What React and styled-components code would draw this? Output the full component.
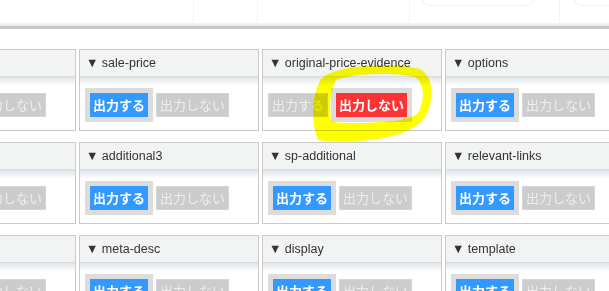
import React from 'react'
import styled, { createGlobalStyle } from 'styled-components'

const GlobalStyle = createGlobalStyle`
    html, body {
        margin: 0;
        padding: 0;
        background: #fff;
        overflow: hidden;
    }
    body {
        font-family: "Liberation Sans", Arial, "Noto Sans CJK JP", sans-serif;
    }
`;

const Page = styled.div`
    position: relative;
    width: 609px;
    height: 291px;
    overflow: hidden;
`;

const TopBar = styled.div`
    display: flex;
    height: 23px;
    overflow: hidden;
`;

const TopCell = styled.div`
    width: ${p => p.w}px;
    flex-shrink: 0;
    border-right: 1px solid #f4f4f4;
    padding-left: ${p => p.pad || 0}px;
    box-sizing: border-box;
`;

const FaintBox = styled.div`
    width: ${p => p.w}px;
    height: 20px;
    margin-top: -16px;
    border: 1px solid #f1f1f1;
    border-radius: 7px;
`;

const Rule = styled.div`
    height: 3px;
    background: linear-gradient(#f5f5f5, #e8e8e8);
    border-bottom: 3px solid #c9c9c9;
`;

const Grid = styled.div`
    display: grid;
    grid-template-columns: repeat(4, 180px);
    column-gap: 3px;
    row-gap: 11px;
    margin: 20px 0 0 -104px;
`;

const Card = styled.div`
    height: 82px;
    box-sizing: border-box;
    border: 1px solid #cacaca;
    display: flex;
    flex-direction: column;
`;

const Header = styled.div`
    height: 26px;
    line-height: 27px;
    background: #f2f3f3;
    border-bottom: 1px solid #d9dbde;
    padding-left: 6px;
    font-size: 12.5px;
    color: #333;
    white-space: nowrap;
`;

const Body = styled.div`
    flex: 1;
    display: flex;
    align-items: flex-start;
    gap: 3px;
    padding: 11px 0 0 5px;
    background: linear-gradient(#e0e4ea, #ffffff 9px);
`;

const Toggle = styled.div`
    display: flex;
    align-items: center;
    height: 34px;
`;

const Frame = styled.div`
    border: 5px solid #dcdcdc;
    display: flex;
`;

const Button = styled.span`
    display: inline-block;
    height: 24px;
    box-sizing: border-box;
    padding: 0 ${p => (p.on ? 2 : 3)}px;
    line-height: 22px;
    font-family: "Noto Sans CJK JP", sans-serif;
    font-size: 13px;
    font-weight: ${p => (p.on ? 700 : 400)};
    white-space: nowrap;
    color: ${p => (p.on ? '#fff' : '#eeeeee')};
    background: ${p => (p.on ? p.color : '#cccccc')};
    border: 1px solid ${p => (p.on ? p.color : '#d6d6d6')};
`;

const Highlight = styled.svg`
    position: absolute;
    left: 0;
    top: 0;
    pointer-events: none;
    mix-blend-mode: multiply;
`;

const BLUE = '#3399ff';
const RED = '#ff3333';

const Option = ({ label, on, color }) =>
    on ? (
        <Frame>
            <Button on color={color}>{label}</Button>
        </Frame>
    ) : (
        <Button>{label}</Button>
    );

const Field = ({ name, off }) => (
    <Card>
        <Header>▼ {name}</Header>
        <Body>
            <Toggle>
                <Option label="出力する" on={!off} color={BLUE} />
            </Toggle>
            <Toggle>
                <Option label="出力しない" on={off} color={RED} />
            </Toggle>
        </Body>
    </Card>
);

const fields = [
    { name: 'description' },
    { name: 'sale-price' },
    { name: 'original-price-evidence', off: true },
    { name: 'options' },
    { name: 'additional2' },
    { name: 'additional3' },
    { name: 'sp-additional' },
    { name: 'relevant-links' },
    { name: 'meta-key' },
    { name: 'meta-desc' },
    { name: 'display' },
    { name: 'template' },
];

export default () => {
    return (
        <Page>
            <GlobalStyle />
            <TopBar>
                <TopCell w={194} />
                <TopCell w={64} />
                <TopCell w={152} />
                <TopCell w={150} pad={12}>
                    <FaintBox w={110} />
                </TopCell>
                <TopCell w={60} pad={14}>
                    <FaintBox w={80} />
                </TopCell>
            </TopBar>
            <Rule />
            <Grid>
                {fields.map(f => (
                    <Field key={f.name} name={f.name} off={f.off} />
                ))}
            </Grid>
            <Highlight width="609" height="291" viewBox="0 0 609 291">
                <path
                    fillRule="evenodd"
                    fill="#ffff00"
                    d="M318 140 C311 122 311 96 321 79 C334 64 398 62 420 69 C434 77 435 100 425 117 C415 133 382 141 348 141 C333 141 321 141 318 140 Z
                       M331 121 C329 106 330 91 336 80 C350 73 400 72 415 77 C425 84 425 100 418 113 C410 121 382 123 350 123 C340 123 333 122 331 121 Z"
                />
            </Highlight>
        </Page>
    )
}
